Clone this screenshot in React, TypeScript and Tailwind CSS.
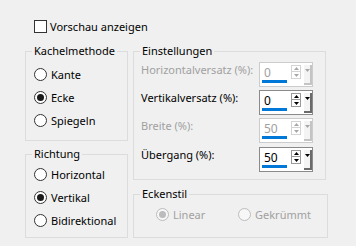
import React from "react";

const Up = ({ c }: { c: string }) => (
  <svg width="5" height="3" viewBox="0 0 5 3" className="block">
    <path d="M2.5 0 L5 3 L0 3 Z" fill={c} />
  </svg>
);
const Down = ({ c }: { c: string }) => (
  <svg width="5" height="3" viewBox="0 0 5 3" className="block">
    <path d="M0 0 L5 0 L2.5 3 Z" fill={c} />
  </svg>
);

function Radio({ label, checked, disabled }: { label: string; checked?: boolean; disabled?: boolean }) {
  return (
    <div className="flex items-center h-[23px]">
      <div
        className={
          "w-[13px] h-[13px] rounded-full border flex items-center justify-center " +
          (disabled ? "border-[#bcbcbc] bg-[#f7f7f7]" : "border-[#333333] bg-white")
        }
      >
        {checked && (
          <div className={"w-[7px] h-[7px] rounded-full " + (disabled ? "bg-[#bcbcbc]" : "bg-[#1a1a1a]")} />
        )}
      </div>
      <span className={"ml-[4px] leading-[16px] " + (disabled ? "text-[#a0a0a0]" : "text-black")}>{label}</span>
    </div>
  );
}

function Group({ title, className, children }: { title: string; className: string; children: React.ReactNode }) {
  return (
    <div className={"relative border border-[#dcdcdc] " + className}>
      <span className="absolute left-[6px] top-[-9px] px-[2px] bg-[#f0f0f0] leading-[16px] text-black whitespace-nowrap">
        {title}
      </span>
      {children}
    </div>
  );
}

function Spin({ label, value, disabled }: { label: string; value: string; disabled?: boolean }) {
  const tri = disabled ? "#a8a8a8" : "#000000";
  return (
    <div className="flex items-start h-[28px]">
      <div className={"w-[125px] pl-[7px] leading-[16px] whitespace-nowrap " + (disabled ? "text-[#a0a0a0]" : "text-black")}>
        {label}
      </div>
      <div className={"w-[54px] h-[25px] border bg-white flex " + (disabled ? "border-[#cccccc]" : "border-[#8a8a8a]")}>
        <div className="ml-[2px] w-[26px] flex flex-col">
          <div className={"mt-[2px] h-[15px] leading-[16px] pl-[2px] text-[12px] " + (disabled ? "text-[#a0a0a0]" : "text-black")}>
            {value}
          </div>
          <div className="h-[3px] bg-[#0078d7]" />
        </div>
        <div className="ml-[4px] mt-[2px] w-[10px] flex flex-col">
          <div className={"h-[7px] border flex items-center justify-center " + (disabled ? "border-[#d4d4d4]" : "border-[#9a9a9a]")}>
            <Up c={tri} />
          </div>
          <div className={"h-[7px] border border-t-0 flex items-center justify-center " + (disabled ? "border-[#d4d4d4]" : "border-[#9a9a9a]")}>
            <Down c={tri} />
          </div>
        </div>
        <div
          className={
            "ml-[3px] mt-[2px] w-[8px] h-[20px] bg-[#f4f4f4] border-r-2 border-b-2 flex justify-center pt-[4px] " +
            (disabled ? "border-[#c4c4c4]" : "border-[#6a6a6a]")
          }
        >
          <Down c={tri} />
        </div>
      </div>
    </div>
  );
}

export default function App() {
  return (
    <div className="w-[356px] h-[246px] bg-[#f0f0f0] text-[11px] text-black font-['Noto_Sans',sans-serif] pt-[20px] pl-[25px] overflow-hidden">
      <div className="flex items-center h-[13px] ml-[9px]">
        <div className="w-[13px] h-[13px] border border-[#333333] bg-white" />
        <span className="ml-[3px] leading-[16px]">Vorschau anzeigen</span>
      </div>
      <div className="flex mt-[18px]">
        <div className="w-[103px] flex flex-col">
          <Group title="Kachelmethode" className="h-[90px] pt-[11px] pl-[8px]">
            <Radio label="Kante" />
            <Radio label="Ecke" checked />
            <Radio label="Spiegeln" />
          </Group>
          <Group title="Richtung" className="mt-[13px] h-[84px] pt-[8px] pl-[8px]">
            <Radio label="Horizontal" />
            <Radio label="Vertikal" checked />
            <Radio label="Bidirektional" />
          </Group>
        </div>
        <div className="ml-[5px] flex flex-col">
          <Group title="Einstellungen" className="w-[193px] h-[129px] pt-[10px]">
            <Spin label="Horizontalversatz (%):" value="0" disabled />
            <Spin label="Vertikalversatz (%):" value="0" />
            <Spin label="Breite (%):" value="50" disabled />
            <div className="mt-[1px]">
              <Spin label="Übergang (%):" value="50" />
            </div>
          </Group>
          <Group title="Eckenstil" className="mt-[14px] w-[195px] h-[44px] pt-[8px] pl-[22px]">
            <div className="flex">
              <div className="w-[82px]">
                <Radio label="Linear" checked disabled />
              </div>
              <Radio label="Gekrümmt" disabled />
            </div>
          </Group>
        </div>
      </div>
    </div>
  );
}
